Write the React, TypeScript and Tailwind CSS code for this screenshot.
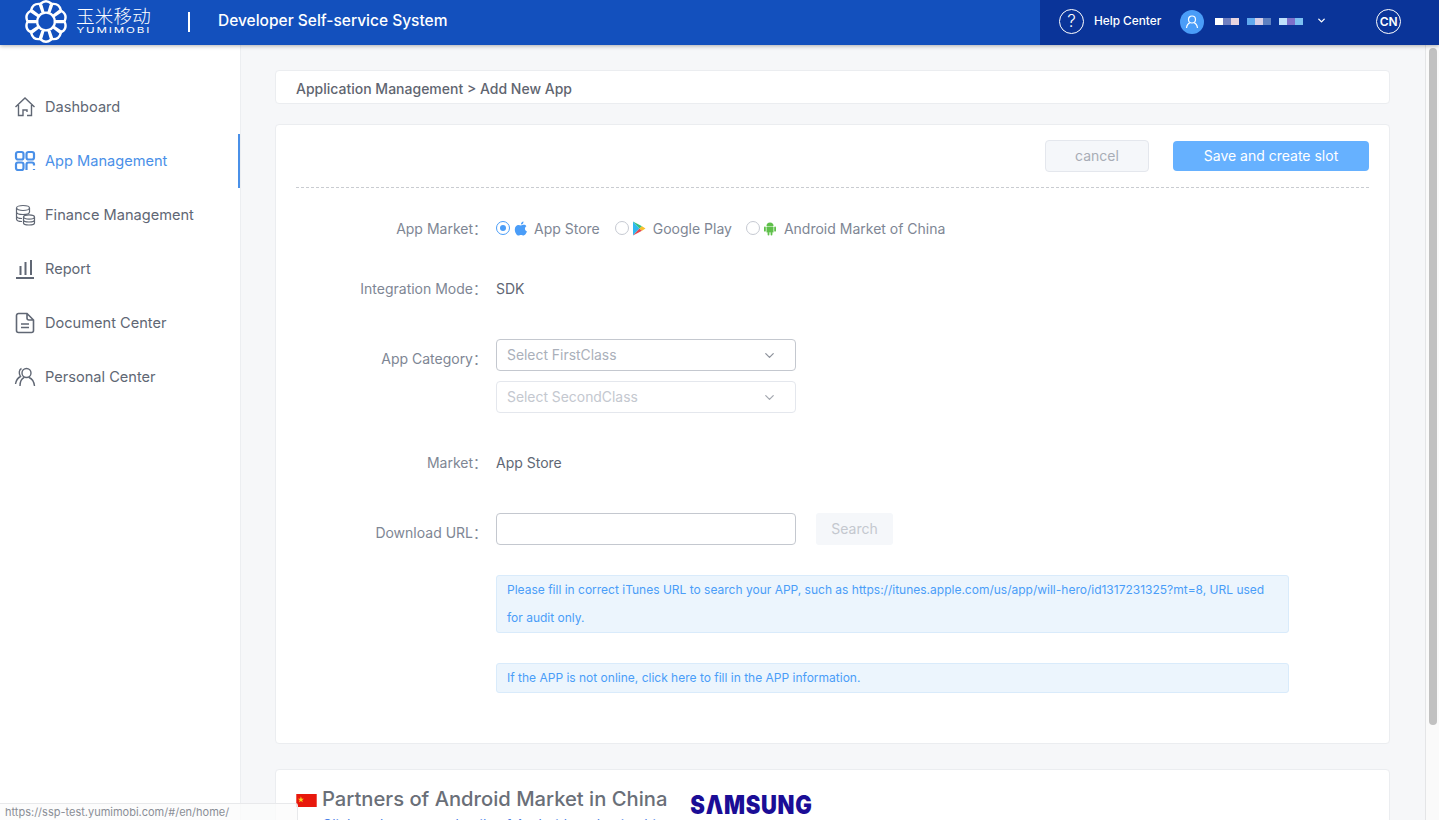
import { ChevronDown } from "lucide-react";
import type { ReactNode } from "react";

const FONT = "font-['Inter','Noto_Sans_CJK_SC',sans-serif]";

function Logo() {
  const petals = Array.from({ length: 10 }, (_, i) => i * 36);
  return (
    <svg width="44" height="44" viewBox="0 0 44 44" fill="none" stroke="white" strokeWidth="2.4" strokeLinejoin="round">
      {petals.map((a) => (
        <path key={a} transform={`rotate(${a} 22 21.5)`} d="M19.6 13 L16.8 3.5 Q22 -1 27.2 3.5 L24.4 13 Q22 12.2 19.6 13 Z" />
      ))}
    </svg>
  );
}

// mosaico que tapa el nombre de usuario
const MOSAIC = [
  ["#ffffff", "#6f7fc0", "#e8d5e0"],
  ["#5fa8ee", "#d8cfe6", "#5d7fc0"],
  ["#bfe0fb", "#7d6fca", "#7cc0f2"],
];

function Header() {
  return (
    <header className="relative z-10 flex h-[45px] shrink-0 bg-[#1350bd] shadow-[0_1px_4px_rgba(0,0,0,0.3)]">
      <div className="flex flex-1 items-center pb-[2px] pl-[24px]">
        <Logo />
        <div className="ml-[8px] flex w-[75px] flex-col items-center pb-[2px]">
          <span className="whitespace-nowrap text-[18.5px] font-light leading-[20px] tracking-[0.2px] text-white">玉米移动</span>
          <span className="scale-x-[1.45] whitespace-nowrap text-[8px] leading-[9px] tracking-[1.25px] text-white">YUMIMOBI</span>
        </div>
        <div className="ml-[37px] h-[20px] w-[2px] bg-white" />
        <span className="ml-[28px] pb-[2px] text-[15.5px] font-medium text-white">Developer Self-service System</span>
      </div>
      <div className="flex w-[399px] items-center bg-[#0a3499] pb-[2px] pl-[19px]">
        <span className="flex h-[25px] w-[25px] items-center justify-center rounded-full border border-white text-[17px] font-light text-white">?</span>
        <span className="ml-[10px] text-[11.8px] font-medium text-white">Help Center</span>
        <span className="ml-[19px] flex h-[24px] w-[24px] items-center justify-center rounded-full bg-[#4a9df8]">
          <svg width="14" height="14" viewBox="0 0 14 14" fill="none" stroke="white" strokeWidth="1.2">
            <circle cx="7" cy="4.5" r="3.5" />
            <path d="M1.5 13 C2 9.5 4 8 5 8 M12.5 13 C12 9.5 10 8 9 8" />
          </svg>
        </span>
        <div className="ml-[11px] flex gap-[8px]">
          {MOSAIC.map((group, i) => (
            <div key={i} className="flex">
              {group.map((c, j) => (
                <span key={j} className="h-[7px] w-[8px]" style={{ backgroundColor: c }} />
              ))}
            </div>
          ))}
        </div>
        <ChevronDown className="mb-[3px] ml-[13px] h-[11px] w-[11px] text-white" strokeWidth={3} />
        <span className="ml-[49px] flex h-[25px] w-[25px] items-center justify-center rounded-full border border-white text-[12px] font-semibold text-white">CN</span>
      </div>
    </header>
  );
}

const iconProps = {
  width: 22,
  height: 22,
  viewBox: "0 0 22 22",
  fill: "none",
  stroke: "currentColor",
  strokeWidth: 1.4,
};

const NAV: { label: string; active?: boolean; icon: ReactNode }[] = [
  {
    label: "Dashboard",
    icon: (
      <svg {...iconProps}>
        <path d="M1.5 11 L11 2 L20.5 11 M4.5 9 V19.5 H9 V14 H13 V16 M17.5 9 V19.5 H13" />
      </svg>
    ),
  },
  {
    label: "App Management",
    active: true,
    icon: (
      <svg {...iconProps} strokeWidth={2.2}>
        <rect x="2" y="2" width="7.5" height="7.5" rx="2" />
        <rect x="12.5" y="2" width="7.5" height="7.5" rx="2" />
        <rect x="2" y="12.5" width="7.5" height="7.5" rx="2" />
        <path d="M12.5 20 V14.5 a2 2 0 0 1 2 -2 H18 a2 2 0 0 1 2 2 V15.5 M20 19 V20" />
      </svg>
    ),
  },
  {
    label: "Finance Management",
    icon: (
      <svg {...iconProps} strokeWidth={1.2}>
        <ellipse cx="9" cy="4" rx="6.5" ry="2.5" />
        <path d="M2.5 4 V15 C2.5 16.5 5 17.5 8 17.5 M2.5 8 C2.5 9.5 5 10.5 9 10.5 S15.5 9.5 15.5 8 V4 M2.5 12 C2.5 13.5 5 14.5 8 14.5" />
        <ellipse cx="15" cy="13" rx="5.5" ry="2.2" />
        <path d="M9.5 13 V19 C9.5 20.3 12 21 15 21 S20.5 20.3 20.5 19 V13 M9.5 16 C9.5 17.3 12 18 15 18 S20.5 17.3 20.5 16" />
      </svg>
    ),
  },
  {
    label: "Report",
    icon: (
      <svg {...iconProps} strokeWidth={2}>
        <path d="M2 20 H20 M6.5 17 V8 M11.5 17 V4 M17 17 V2" />
      </svg>
    ),
  },
  {
    label: "Document Center",
    icon: (
      <svg {...iconProps} strokeWidth={1.6}>
        <path d="M13 1.5 H4.5 A2 2 0 0 0 2.5 3.5 V18.5 A2 2 0 0 0 4.5 20.5 H17.5 A2 2 0 0 0 19.5 18.5 V8 Z M13 1.5 V6 A2 2 0 0 0 15 8 H19.5 M7 12 H15 M7 15.5 H15" />
      </svg>
    ),
  },
  {
    label: "Personal Center",
    icon: (
      <svg {...iconProps}>
        <circle cx="12.5" cy="7" r="4.5" />
        <path d="M6 20 C6 15.5 8 12.5 10 11.5 M15 11.5 C17.5 12.5 20 15.5 20.5 20 M7.5 2.5 C5 3.5 4.5 7.5 6.5 10.5 C3.5 12 2 15 1.5 18" />
      </svg>
    ),
  },
];

function Sidebar() {
  return (
    <aside className="flex w-[241px] shrink-0 flex-col border-r border-[#eceef1] bg-white pt-[35px] shadow-[1px_0_3px_rgba(0,0,0,0.03)]">
      {NAV.map((item) => (
        <div
          key={item.label}
          className={`flex h-[54px] items-center gap-[9px] pl-[14px] text-[14.6px] ${
            item.active ? "border-r-2 border-[#4a90e8] text-[#4a90e8]" : "text-[#606774]"
          }`}
        >
          {item.icon}
          <span className="pt-[2px]">{item.label}</span>
        </div>
      ))}
    </aside>
  );
}

function Row({
  label,
  className,
  labelClass,
  children,
}: {
  label: string;
  className?: string;
  labelClass?: string;
  children: ReactNode;
}) {
  return (
    <div className={`flex ${className ?? ""}`}>
      <span className={`w-[191px] shrink-0 text-right text-[14px] text-[#7e8694] ${labelClass ?? ""}`}>{label}：</span>
      <div className="ml-[9px] flex-1 text-[14px] text-[#606774]">{children}</div>
    </div>
  );
}

function Radio({ checked }: { checked?: boolean }) {
  return (
    <span className={`flex h-[14px] w-[14px] items-center justify-center rounded-full border ${checked ? "border-[#4a9df8]" : "border-[#c6cad2]"}`}>
      {checked && <span className="h-[6px] w-[6px] rounded-full bg-[#4a9df8]" />}
    </span>
  );
}

function Select({ text, disabled }: { text: string; disabled?: boolean }) {
  return (
    <div
      className={`flex h-[32px] w-[300px] items-center justify-between rounded-[4px] border pl-[10px] pr-[18px] text-[13.9px] ${
        disabled ? "border-[#e4e7ed] text-[#c4c8cf]" : "border-[#c4c8cf] text-[#aab0ba]"
      }`}
    >
      <span>{text}</span>
      <ChevronDown className={`h-[15px] w-[15px] ${disabled ? "text-[#a4a8b0]" : "text-[#8e939c]"}`} />
    </div>
  );
}

function Form() {
  return (
    <section className="mt-[20px] h-[620px] shrink-0 rounded-[4px] border border-[#ebedf0] bg-white px-[20px]">
      <div className="flex h-[63px] items-center justify-end gap-[24px] border-b border-dashed border-[#c9ccd1]">
        <button className="h-[32px] w-[104px] rounded-[4px] border border-[#e4e7ed] bg-[#f5f7fa] pb-[2px] text-[14px] text-[#a8adb6]">cancel</button>
        <button className="h-[30px] w-[196px] rounded-[4px] bg-[#66b1ff] pb-[2px] text-[14px] text-white">Save and create slot</button>
      </div>

      <Row label="App Market" className="mt-[30px] h-[20px] items-center">
        <div className="flex items-center text-[#7e8694]">
          <Radio checked />
          <svg className="ml-[4px]" width="14" height="15" viewBox="0 0 14 15" fill="#4a9df8">
            <path d="M9.5 0.5 C9.6 2.2 8.3 3.7 6.9 3.6 C6.8 2.1 8.1 0.6 9.5 0.5 Z M7 4.4 C7.8 4.4 8.6 3.8 9.8 3.8 C10.8 3.8 11.8 4.3 12.4 5.2 C10.2 6.5 10.6 9.6 13 10.5 C12.3 12.2 10.9 14.5 9.6 14.5 C8.6 14.5 8.2 13.9 7 13.9 C5.8 13.9 5.4 14.5 4.4 14.5 C2.8 14.5 0.8 11.2 0.8 8.4 C0.8 5.5 2.7 3.9 4.4 3.9 C5.5 3.9 6.3 4.4 7 4.4 Z" />
          </svg>
          <span className="ml-[6px]">App Store</span>
          <span className="ml-[15px]"><Radio /></span>
          <svg className="ml-[3px]" width="14" height="15" viewBox="0 0 14 15">
            <path d="M1 0.5 L7.5 7.5 L1 14.5 Z" fill="#2fb8ef" />
            <path d="M1 0.5 L10 5.3 L7.5 7.5 Z" fill="#35c17a" />
            <path d="M1 14.5 L10 9.7 L7.5 7.5 Z" fill="#e5484d" />
            <path d="M10 5.3 L13.5 7.5 L10 9.7 L7.5 7.5 Z" fill="#f7c02b" />
          </svg>
          <span className="ml-[7px]">Google Play</span>
          <span className="ml-[14px]"><Radio /></span>
          <svg className="ml-[3px]" width="14" height="15" viewBox="0 0 14 15" fill="#5fc04a">
            <path d="M3.5 5 A3.5 3.5 0 0 1 10.5 5 Z" />
            <rect x="3.5" y="5.6" width="7" height="6" rx="0.6" />
            <rect x="1" y="5.6" width="1.8" height="5" rx="0.9" />
            <rect x="11.2" y="5.6" width="1.8" height="5" rx="0.9" />
            <rect x="4.6" y="11" width="1.8" height="3.5" rx="0.9" />
            <rect x="7.6" y="11" width="1.8" height="3.5" rx="0.9" />
          </svg>
          <span className="ml-[7px]">Android Market of China</span>
        </div>
      </Row>

      <Row label="Integration Mode" className="mt-[40px] h-[20px] items-center">SDK</Row>

      <Row label="App Category" className="mt-[41px]" labelClass="pt-[9px]">
        <div className="flex flex-col gap-[10px]">
          <Select text="Select FirstClass" />
          <Select text="Select SecondClass" disabled />
        </div>
      </Row>

      <Row label="Market" className="mt-[39px] h-[20px] items-center">App Store</Row>

      <Row label="Download URL" className="mt-[41px]" labelClass="pt-[9px]">
        <div className="flex items-center gap-[20px]">
          <div className="h-[32px] w-[300px] rounded-[4px] border border-[#c4c8cf]" />
          <button className="h-[32px] w-[77px] rounded-[3px] bg-[#f5f7fa] pb-[2px] text-[14px] text-[#c4c8cf]">Search</button>
        </div>
        <div className="mt-[30px] w-[793px] rounded-[3px] border border-[#d9ebfb] bg-[#ecf5fd] px-[10px] text-[12px] leading-[28px] text-[#4a9df8]">
          Please fill in correct iTunes URL to search your APP, such as https://itunes.apple.com/us/app/will-hero/id1317231325?mt=8, URL used for audit only.
        </div>
        <div className="mt-[30px] w-[793px] rounded-[3px] border border-[#d9ebfb] bg-[#ecf5fd] px-[10px] text-[12px] leading-[28px] text-[#4a9df8]">
          If the APP is not online, click here to fill in the APP information.
        </div>
      </Row>
    </section>
  );
}

function Partners() {
  return (
    <section className="mt-[25px] h-[120px] shrink-0 rounded-[4px] border border-[#ebedf0] bg-white px-[20px] pt-[17px]">
      <div className="flex h-[24px] items-start">
        <svg className="mt-[7px]" width="21" height="13" viewBox="0 0 22 14">
          <rect width="22" height="14" fill="#e8180c" />
          <polygon points="5,2.5 5.8,5 8.3,5 6.3,6.5 7,9 5,7.5 3,9 3.7,6.5 1.7,5 4.2,5" fill="#f8d820" />
        </svg>
        <span className="ml-[5px] text-[20.2px] font-medium leading-[24px] text-[#6a6f78]">Partners of Android Market in China</span>
        <span className="ml-[23px] mt-[6px] scale-y-[1.15] text-[22px] font-black leading-[24px] tracking-[0.7px] text-[#1b0d96]">SΛMSUNG</span>
      </div>
      <p className="ml-[26px] mt-[3px] text-[14px] text-[#4a80e8]">Click and get more details of Android market in china</p>
    </section>
  );
}

export default function App() {
  return (
    <div className={`relative flex h-[820px] flex-col overflow-hidden bg-white ${FONT}`}>
      <Header />
      <div className="flex min-h-0 flex-1">
        <Sidebar />
        <main className="flex min-w-0 flex-1 flex-col overflow-hidden bg-[#f6f7f9] pl-[34px] pr-[35px] pt-[25px]">
          <div className="flex h-[34px] shrink-0 items-center rounded-[4px] border border-[#ebedf0] bg-white pl-[20px] pt-[3px] text-[14px] font-medium text-[#5f6570]">
            Application Management &gt; Add New App
          </div>
          <Form />
          <Partners />
        </main>
        {/* barra de scroll */}
        <div className="flex w-[14px] shrink-0 justify-center border-l border-[#e4e5e7] bg-[#fafafa] pt-[3px]">
          <div className="h-[677px] w-[8px] rounded-full bg-[#c1c1c1]" />
        </div>
      </div>
      {/* url de estado del navegador */}
      <div className="absolute bottom-0 left-0 flex h-[17px] w-[298px] items-center rounded-tr-[3px] border-r border-t border-[#e8e9eb] bg-[#fbfbfb]/80 pl-[5px] text-[11px] text-[#8a8e96]">
        https://ssp-test.yumimobi.com/#/en/home/
      </div>
    </div>
  );
}
